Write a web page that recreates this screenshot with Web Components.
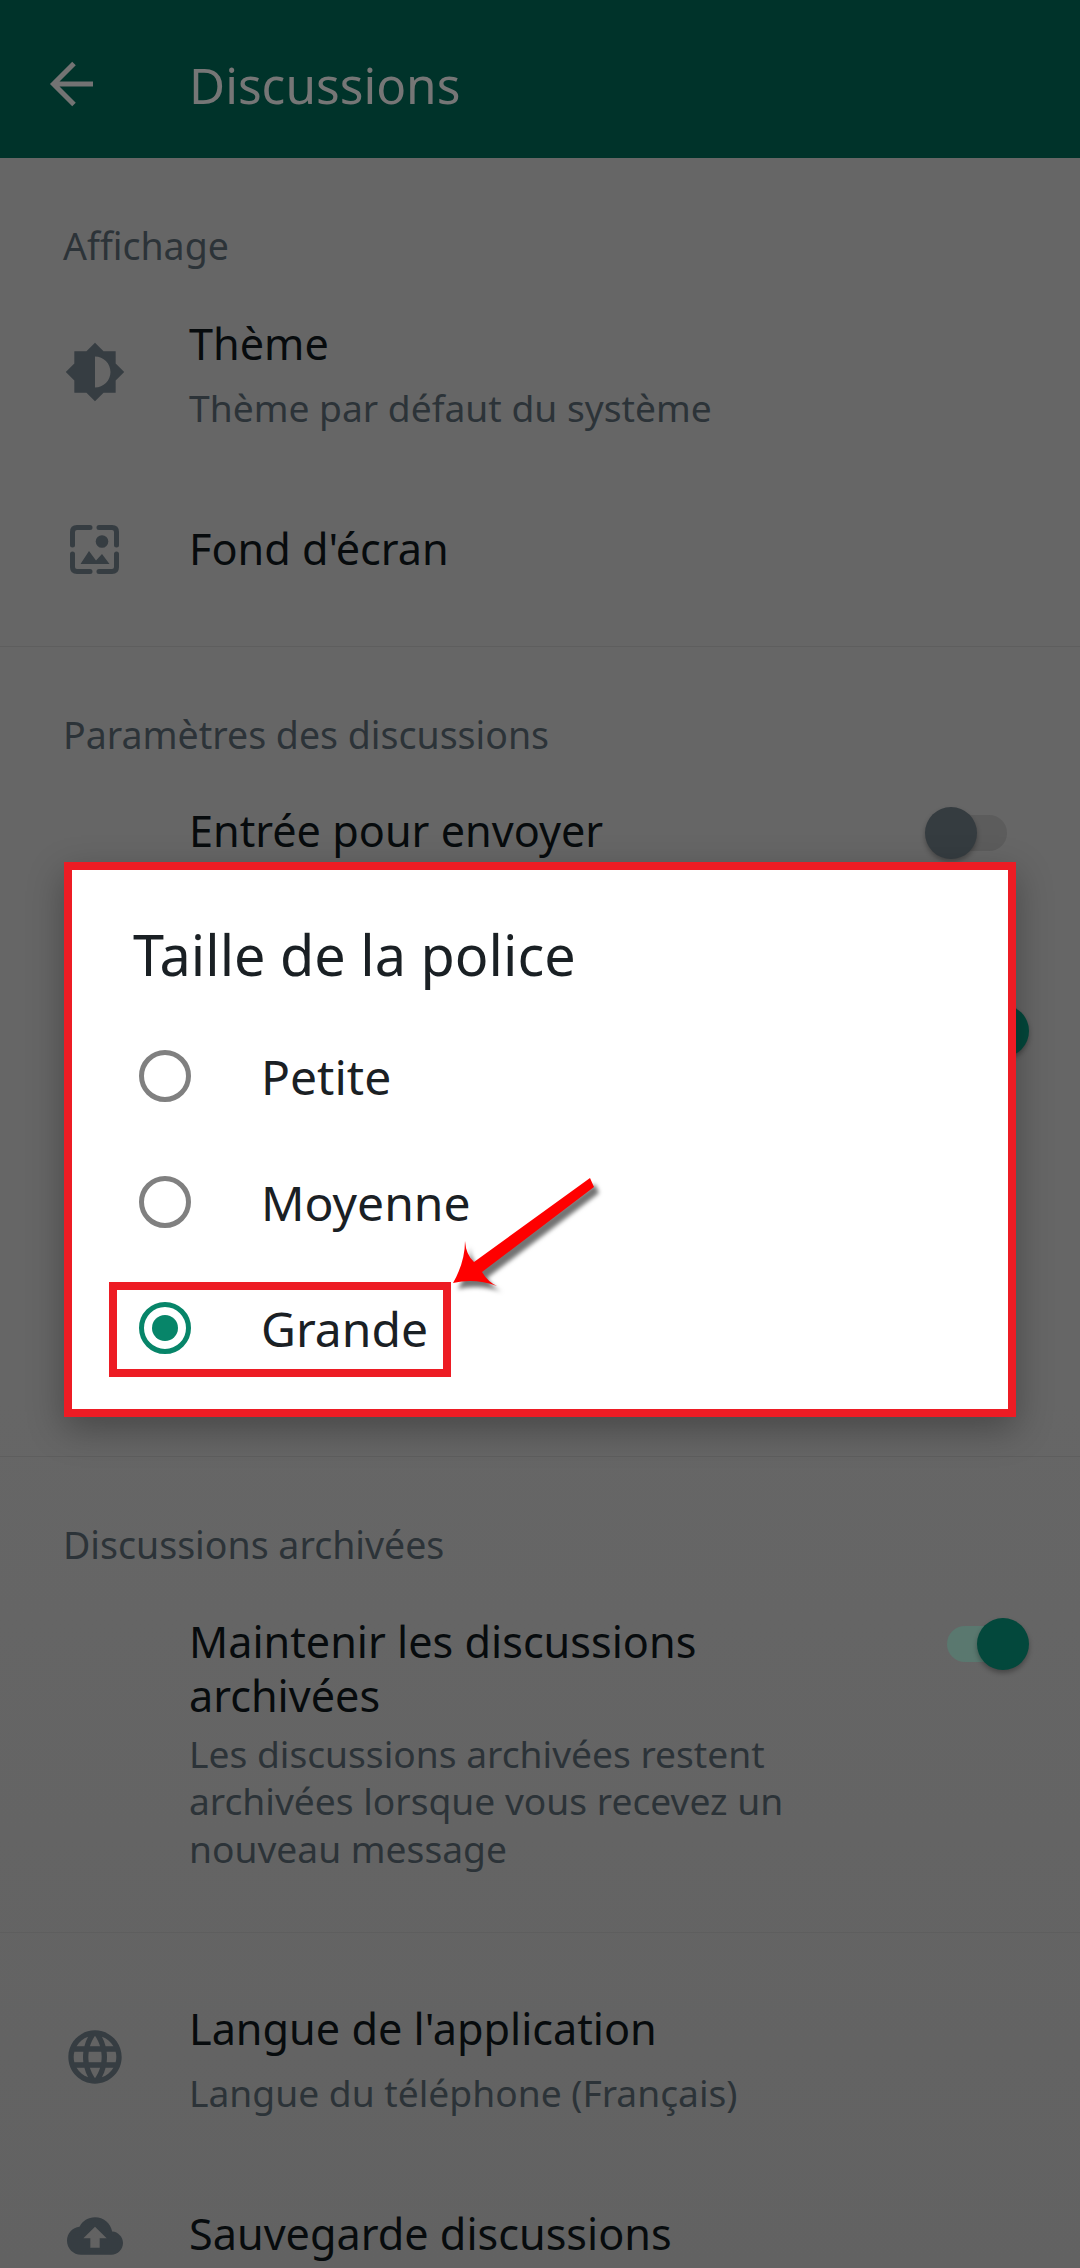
<!DOCTYPE html>
<html lang="fr"><head><meta charset="utf-8"><title>Discussions</title>
<style>
html,body{margin:0;padding:0;background:#666}
body{font-family:"Noto Sans","Open Sans",sans-serif}
</style></head>
<body>
<settings-page>
  <app-bar>Discussions</app-bar>
  <section-label style="--mt:62px">Affichage</section-label>
  <setting-row icon="theme" style="--pt:47px;--pb:46px;--gap:13px;--shift:4px"><span slot="title">Thème</span><span slot="sub">Thème par défaut du système</span></setting-row>
  <setting-row icon="wall" style="--pt:44px;--pb:70px;--gap:0px;--shift:-2px"><span slot="title">Fond d'écran</span></setting-row>
  <h-rule></h-rule>
  <section-label style="--mt:62px">Paramètres des discussions</section-label>
  <setting-row toggle="off" style="--pt:45px;--pb:144px;--gap:0px"><span slot="title">Entrée pour envoyer</span></setting-row>
  <setting-row toggle="on" style="--pt:0px;--pb:400px;--gap:0px"></setting-row>
  <h-rule></h-rule>
  <section-label style="--mt:62px">Discussions archivées</section-label>
  <setting-row toggle="on" style="--pt:46px;--pb:60px;--gap:7px"><span slot="title">Maintenir les discussions archivées</span><span slot="sub">Les discussions archivées restent archivées lorsque vous recevez un nouveau message</span></setting-row>
  <h-rule></h-rule>
  <setting-row icon="globe" style="--pt:69px;--pb:0px;--gap:13px;--shift:4px"><span slot="title">Langue de l'application</span><span slot="sub">Langue du téléphone (Français)</span></setting-row>
  <setting-row icon="cloud" style="--pt:90px;--pb:0px;--gap:0px;--shift:-4px"><span slot="title">Sauvegarde discussions</span></setting-row>
  <font-dialog slot="overlay"></font-dialog>
</settings-page>
<script>
function tpl(html){const t=document.createElement('template');t.innerHTML=html;return t;}
function def(name,template,extra){
  class E extends HTMLElement{
    constructor(){super();this.attachShadow({mode:'open'}).appendChild(template.content.cloneNode(true));}
    connectedCallback(){extra&&extra.call(this);}
  }
  customElements.define(name,E);
}
const IC='#363d42';
const ICONS={
 theme:`<svg width="62" height="62" viewBox="0 0 24 24"><path fill="${IC}" d="M20 15.31L23.31 12 20 8.69V4h-4.69L12 .69 8.69 4H4v4.69L.69 12 4 15.31V20h4.69L12 23.31 15.31 20H20v-4.69zM12 18V6c3.31 0 6 2.69 6 6s-2.69 6-6 6z"/></svg>`,
 wall:`<svg width="49" height="49" viewBox="0 0 49 49"><g fill="none" stroke="${IC}" stroke-width="5" stroke-linecap="round"><path d="M2.5 20V7Q2.5 2.5 7 2.5H20"/><path d="M29 2.5H42Q46.5 2.5 46.5 7V20"/><path d="M2.5 29V42Q2.5 46.5 7 46.5H20"/><path d="M46.5 29V42Q46.5 46.5 42 46.5H29"/></g><circle cx="32" cy="16.5" r="6.3" fill="${IC}"/><path fill="${IC}" d="M10.5 39L19 26 26 35.5 32 29 39.5 39Z"/></svg>`,
 globe:`<svg width="64" height="64" viewBox="0 0 24 24"><path fill="${IC}" d="M11.99 2C6.47 2 2 6.48 2 12s4.47 10 9.99 10C17.52 22 22 17.52 22 12S17.52 2 11.99 2zm6.93 6h-2.95c-.32-1.25-.78-2.45-1.38-3.56 1.84.63 3.37 1.91 4.33 3.56zM12 4.04c.83 1.2 1.48 2.53 1.91 3.96h-3.82c.43-1.43 1.08-2.76 1.91-3.96zM4.26 14C4.1 13.36 4 12.69 4 12s.1-1.36.26-2h3.38c-.08.66-.14 1.32-.14 2 0 .68.06 1.34.14 2H4.26zm.82 2h2.95c.32 1.25.78 2.45 1.38 3.56-1.84-.63-3.37-1.9-4.33-3.56zm2.95-8H5.08c.96-1.66 2.49-2.93 4.33-3.56C8.81 5.55 8.35 6.75 8.03 8zM12 19.96c-.83-1.2-1.48-2.53-1.91-3.96h3.82c-.43 1.43-1.08 2.76-1.91 3.96zM14.34 14H9.66c-.09-.66-.16-1.32-.16-2 0-.68.07-1.35.16-2h4.68c.09.65.16 1.32.16 2 0 .68-.07 1.34-.16 2zm.25 5.56c.6-1.11 1.06-2.31 1.38-3.56h2.95c-.96 1.65-2.49 2.93-4.33 3.56zM16.36 14c.08-.66.14-1.32.14-2 0-.68-.06-1.34-.14-2h3.38c.16.64.26 1.31.26 2s-.1 1.36-.26 2h-3.38z"/></svg>`,
 cloud:`<svg width="56" height="56" viewBox="0 0 24 24"><path fill="${IC}" d="M19.35 10.04C18.67 6.59 15.64 4 12 4 9.11 4 6.6 5.64 5.35 8.04 2.34 8.36 0 10.91 0 14c0 3.31 2.69 6 6 6h13c2.76 0 5-2.24 5-5 0-2.64-2.05-4.78-4.65-4.96zM14 13v4h-4v-4H7l5-5 5 5h-3z"/></svg>`
};
def('settings-page',tpl(`<style>:host{display:block;position:relative;width:1080px;height:2268px;overflow:hidden;background:linear-gradient(#666 0,#666 1400px,#626262 2268px);font-family:"Noto Sans","Open Sans",sans-serif}</style><slot></slot><slot name="overlay"></slot>`));
def('app-bar',tpl(`<style>:host{display:flex;align-items:center;height:158px;background:#00332a;color:#767676;font-size:49.5px;padding-top:12px;box-sizing:border-box}
.b{width:147px;display:flex}.t{margin-left:42px}</style>
<div class="b"><svg style="margin-left:49px;margin-top:-2px" width="48" height="48" viewBox="0 0 48 48"><path fill="none" stroke="#737373" stroke-width="5" d="M44 24H6M25 3.5L4.5 24 25 44.5"/></svg></div><div class="t"><slot></slot></div>`));
def('section-label',tpl(`<style>:host{display:block;margin-top:var(--mt);padding-left:63px;height:50px;line-height:52px;font-size:37.5px;color:#2c3338}</style><slot></slot>`));
def('h-rule',tpl(`<style>:host{display:block;height:1px;background:#5e5e5e}</style>`));
def('setting-row',tpl(`<style>:host{display:block;padding:var(--pt) 51px var(--pb) 0}
.g{display:grid;grid-template-columns:189px 1fr auto;align-items:center}
.i{display:flex;justify-content:center;margin-bottom:var(--shift,0px)}
.tx{max-width:660px;min-height:54px}
.title{font-size:43.2px;line-height:54px;color:#070b0d}
.sub{font-size:37.2px;line-height:47.5px;color:#2c3338;margin-top:var(--gap)}
.tg{align-self:start}
</style><div class="g"><div class="i"></div><div class="tx"><div class="title"><slot name="title"></slot></div><div class="sub"><slot name="sub"></slot></div></div><div class="tg"></div></div>`),function(){
  const s=this.shadowRoot;
  const ic=this.getAttribute('icon'); if(ic) s.querySelector('.i').innerHTML=ICONS[ic];
  const tg=this.getAttribute('toggle'); if(tg){const e=document.createElement('toggle-switch');e.setAttribute('state',tg);s.querySelector('.tg').appendChild(e);}
  if(!this.querySelector('[slot=sub]')) s.querySelector('.sub').style.display='none';
});
def('toggle-switch',tpl(`<style>:host{display:block;position:relative;width:104px;height:54px}
.tr{position:absolute;left:22px;right:22px;top:11px;height:36px;border-radius:18px;background:#5c5c5c}
.k{position:absolute;left:0;top:3px;width:52px;height:52px;border-radius:50%;background:#353c40;box-shadow:0 3px 5px rgba(0,0,0,.3)}
:host([state=on]) .tr{background:#5a786f}
:host([state=on]) .k{left:auto;right:0;background:#03483c}
</style><div class="tr"></div><div class="k"></div>`));
def('radio-option',tpl(`<style>:host{display:flex;align-items:center;height:126px;padding-left:67px;gap:70px;font-size:48px;color:#1a2024}
.r{width:52px;height:52px;box-sizing:border-box;border:5px solid #808080;border-radius:50%;display:flex;align-items:center;justify-content:center}
:host([checked]) .r{border-color:#078569}
:host([checked]) .r::after{content:"";width:26px;height:26px;border-radius:50%;background:#078569}
</style><div class="r"></div><div><slot></slot></div>`));
def('font-dialog',tpl(`<style>:host{display:block;position:absolute;left:64px;top:862px;width:952px;height:555px;box-sizing:border-box;border:8px solid #ed1c24;background:#fff;box-shadow:0 12px 34px rgba(0,0,0,.3);padding-top:54px}
h2{margin:0 0 29px;padding-left:61px;font-weight:400;font-size:55.8px;line-height:60px;color:#1a2024}
.box{position:absolute;left:37px;top:412px;width:342px;height:95px;box-sizing:border-box;border:8px solid #ed1c24}
svg{position:absolute;left:373px;top:300px;overflow:visible;filter:drop-shadow(5px 6px 2px rgba(0,0,0,.55))}
</style><h2>Taille de la police</h2>
<radio-option>Petite</radio-option><radio-option>Moyenne</radio-option><radio-option checked>Grande</radio-option>
<div class="box"></div>
<svg width="160" height="125" viewBox="445 1170 160 125"><path fill="#f00" d="M590 1178L594 1187L482 1272Q488 1282 497 1286Q475 1278 453 1283Q465 1262 465 1241Q466 1255 474 1262Z"/></svg>`));
</script>
</body></html>
